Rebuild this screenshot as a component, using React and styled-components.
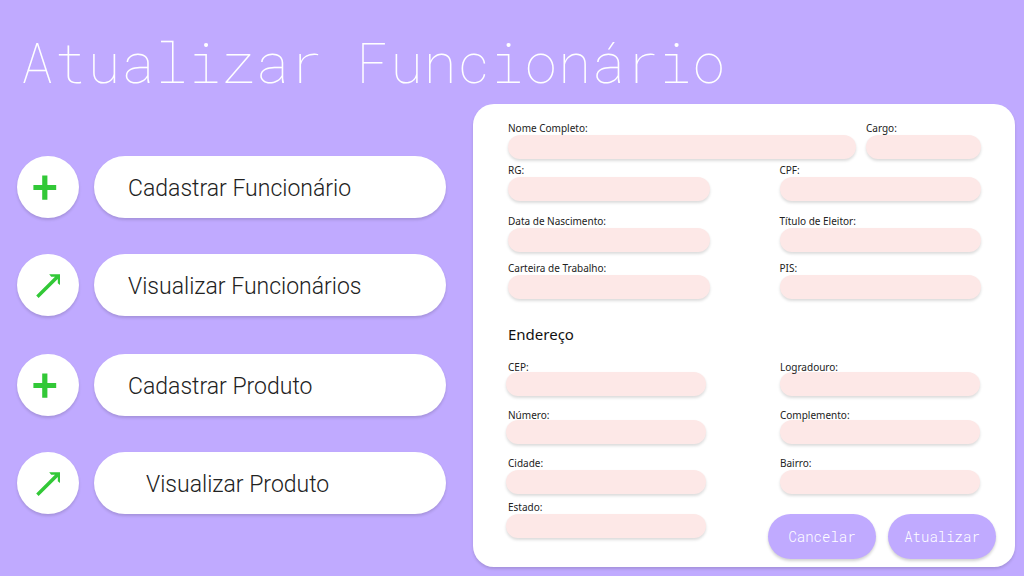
import React from "react";
import styled, { createGlobalStyle } from "styled-components";

const lilac = "#c0aaff";
const mono = '"Roboto Mono", "Liberation Mono", monospace';
const sans = '"Segoe UI", "Noto Sans", sans-serif';

const GlobalStyle = createGlobalStyle`
  *, *::before, *::after { box-sizing: border-box; }
  body { margin: 0; background: ${lilac}; font-family: ${sans}; color: #222; }
`;

const Page = styled.div`
  min-height: 100vh;
  padding: 21px 9px 8px 17px;
`;

const Title = styled.h1`
  margin: 0 0 3px;
  padding-left: 3px;
  font-family: ${mono};
  font-size: 56px;
  font-weight: 100;
  line-height: 80px;
  color: #fff;
`;

const Columns = styled.div`
  display: grid;
  grid-template-columns: minmax(0, 429fr) minmax(0, 542fr);
  column-gap: 27px;
`;

const Menu = styled.nav`
  display: flex;
  flex-direction: column;
  gap: 38px;
  padding-top: 52px;
`;

const MenuGroup = styled.div`
  display: flex;
  flex-direction: column;
  gap: 36px;
`;

const MenuRow = styled.div`
  display: flex;
  gap: 15px;
`;

const RoundButton = styled.button`
  flex: none;
  width: 62px;
  height: 62px;
  padding: 0;
  border: 0;
  border-radius: 50%;
  background: #fff;
  box-shadow: 0 2px 3px rgba(0, 0, 0, 0.14);
  svg { display: block; }
`;

const PillButton = styled.button`
  flex: 1;
  height: 62px;
  padding: 3px 0 0 ${(p) => (p.$indented ? 52 : 34)}px;
  border: 0;
  border-radius: 31px;
  background: #fff;
  box-shadow: 0 2px 3px rgba(0, 0, 0, 0.14);
  font-family: Roboto, sans-serif;
  font-size: 23px;
  font-weight: 300;
  line-height: 28px;
  text-align: left;
  color: #222;
`;

const Card = styled.form`
  padding: 17px 19px 8px 33px;
  border-radius: 21px;
  background: #fff;
  box-shadow: 0 2px 3px rgba(0, 0, 0, 0.14);
`;

const Section = styled.div`
  padding: 0 15px 0 2px;
`;

const AddressSection = styled.div`
  padding-right: 16px;
`;

const Row = styled.div`
  display: grid;
  grid-template-columns: ${(p) => p.$columns};
  column-gap: ${(p) => p.$gap}px;
  margin-top: ${(p) => p.$space || 0}px;
`;

const FieldBox = styled.div`
  display: flex;
  flex-direction: column;
`;

const Label = styled.label`
  position: relative;
  z-index: 1;
  padding-left: ${(p) => (p.$inset ? 2 : 0)}px;
  font-size: 10px;
  line-height: ${(p) => (p.$tight ? 10 : 14)}px;
`;

const Input = styled.input`
  width: 100%;
  height: 24px;
  padding: 0 12px;
  border: 0;
  border-radius: 12px;
  background: #fde8e7;
  box-shadow: 0 2px 3px rgba(0, 0, 0, 0.14);
  font-family: ${sans};
  font-size: 10px;
`;

const SectionTitle = styled.h2`
  margin: 24px 0 0 2px;
  font-size: 15px;
  font-weight: 400;
  line-height: 22px;
  color: #111;
`;

const Footer = styled.div`
  display: grid;
  grid-template-columns: minmax(0, 200fr) minmax(0, 228fr);
  column-gap: 62px;
  margin-top: 6px;
`;

const Actions = styled.div`
  display: flex;
  gap: 12px;
  padding-top: 14px;
`;

const ActionButton = styled.button`
  flex: 1;
  height: 45px;
  padding: 0;
  border: 0;
  border-radius: 23px;
  background: ${lilac};
  box-shadow: 0 2px 3px rgba(0, 0, 0, 0.18);
  font-family: ${mono};
  font-size: 14px;
  font-weight: 300;
  color: #fff;
`;

function PlusIcon() {
  return (
    <svg width="62" height="62" viewBox="0 0 62 62" fill="#32c837" aria-hidden="true">
      <path d="M25.2 19.6h5.2v9.4h8.8v5h-8.8v9.8h-5.2V34h-8.8v-5h8.8z" />
    </svg>
  );
}

function ArrowIcon() {
  return (
    <svg width="62" height="62" viewBox="0 0 62 62" fill="#32c837" aria-hidden="true">
      <path d="M32.2 20.2h10.8v10.8l-2.2-1.8v-4.2L21.6 44l-2.4-2.4L38 22.8h-3.8z" />
    </svg>
  );
}

function MenuItem({ icon, text, indented }) {
  return (
    <MenuRow>
      <RoundButton type="button" aria-label={text}>
        {icon === "plus" ? <PlusIcon /> : <ArrowIcon />}
      </RoundButton>
      <PillButton type="button" $indented={indented}>{text}</PillButton>
    </MenuRow>
  );
}

function Field({ id, label, tight, inset }) {
  return (
    <FieldBox>
      <Label htmlFor={id} $tight={tight} $inset={inset}>{label}</Label>
      <Input id={id} name={id} type="text" />
    </FieldBox>
  );
}

const half = "minmax(0, 1fr) minmax(0, 1fr)";

export default function App() {
  return (
    <Page>
      <GlobalStyle />
      <Title>Atualizar Funcionário</Title>
      <Columns>
        <Menu>
          <MenuGroup>
            <MenuItem icon="plus" text="Cadastrar Funcionário" />
            <MenuItem icon="arrow" text="Visualizar Funcionários" />
          </MenuGroup>
          <MenuGroup>
            <MenuItem icon="plus" text="Cadastrar Produto" />
            <MenuItem icon="arrow" text="Visualizar Produto" indented />
          </MenuGroup>
        </Menu>
        <Card onSubmit={(e) => e.preventDefault()}>
          <Section>
            <Row $columns="minmax(0, 348fr) minmax(0, 115fr)" $gap={10}>
              <Field id="nome" label="Nome Completo:" />
              <Field id="cargo" label="Cargo:" />
            </Row>
            <Row $columns={half} $gap={70} $space={4}>
              <Field id="rg" label="RG:" />
              <Field id="cpf" label="CPF:" />
            </Row>
            <Row $columns={half} $gap={70} $space={13}>
              <Field id="nascimento" label="Data de Nascimento:" />
              <Field id="titulo" label="Título de Eleitor:" />
            </Row>
            <Row $columns={half} $gap={70} $space={9}>
              <Field id="carteira" label="Carteira de Trabalho:" />
              <Field id="pis" label="PIS:" />
            </Row>
          </Section>
          <SectionTitle>Endereço</SectionTitle>
          <AddressSection>
            <Row $columns={half} $gap={74} $space={17}>
              <Field id="cep" label="CEP:" tight inset />
              <Field id="logradouro" label="Logradouro:" tight />
            </Row>
            <Row $columns={half} $gap={74} $space={14}>
              <Field id="numero" label="Número:" tight inset />
              <Field id="complemento" label="Complemento:" tight />
            </Row>
            <Row $columns={half} $gap={74} $space={12}>
              <Field id="cidade" label="Cidade:" inset />
              <Field id="bairro" label="Bairro:" />
            </Row>
          </AddressSection>
          <Footer>
            <Field id="estado" label="Estado:" inset />
            <Actions>
              <ActionButton type="button">Cancelar</ActionButton>
              <ActionButton type="submit">Atualizar</ActionButton>
            </Actions>
          </Footer>
        </Card>
      </Columns>
    </Page>
  );
}
